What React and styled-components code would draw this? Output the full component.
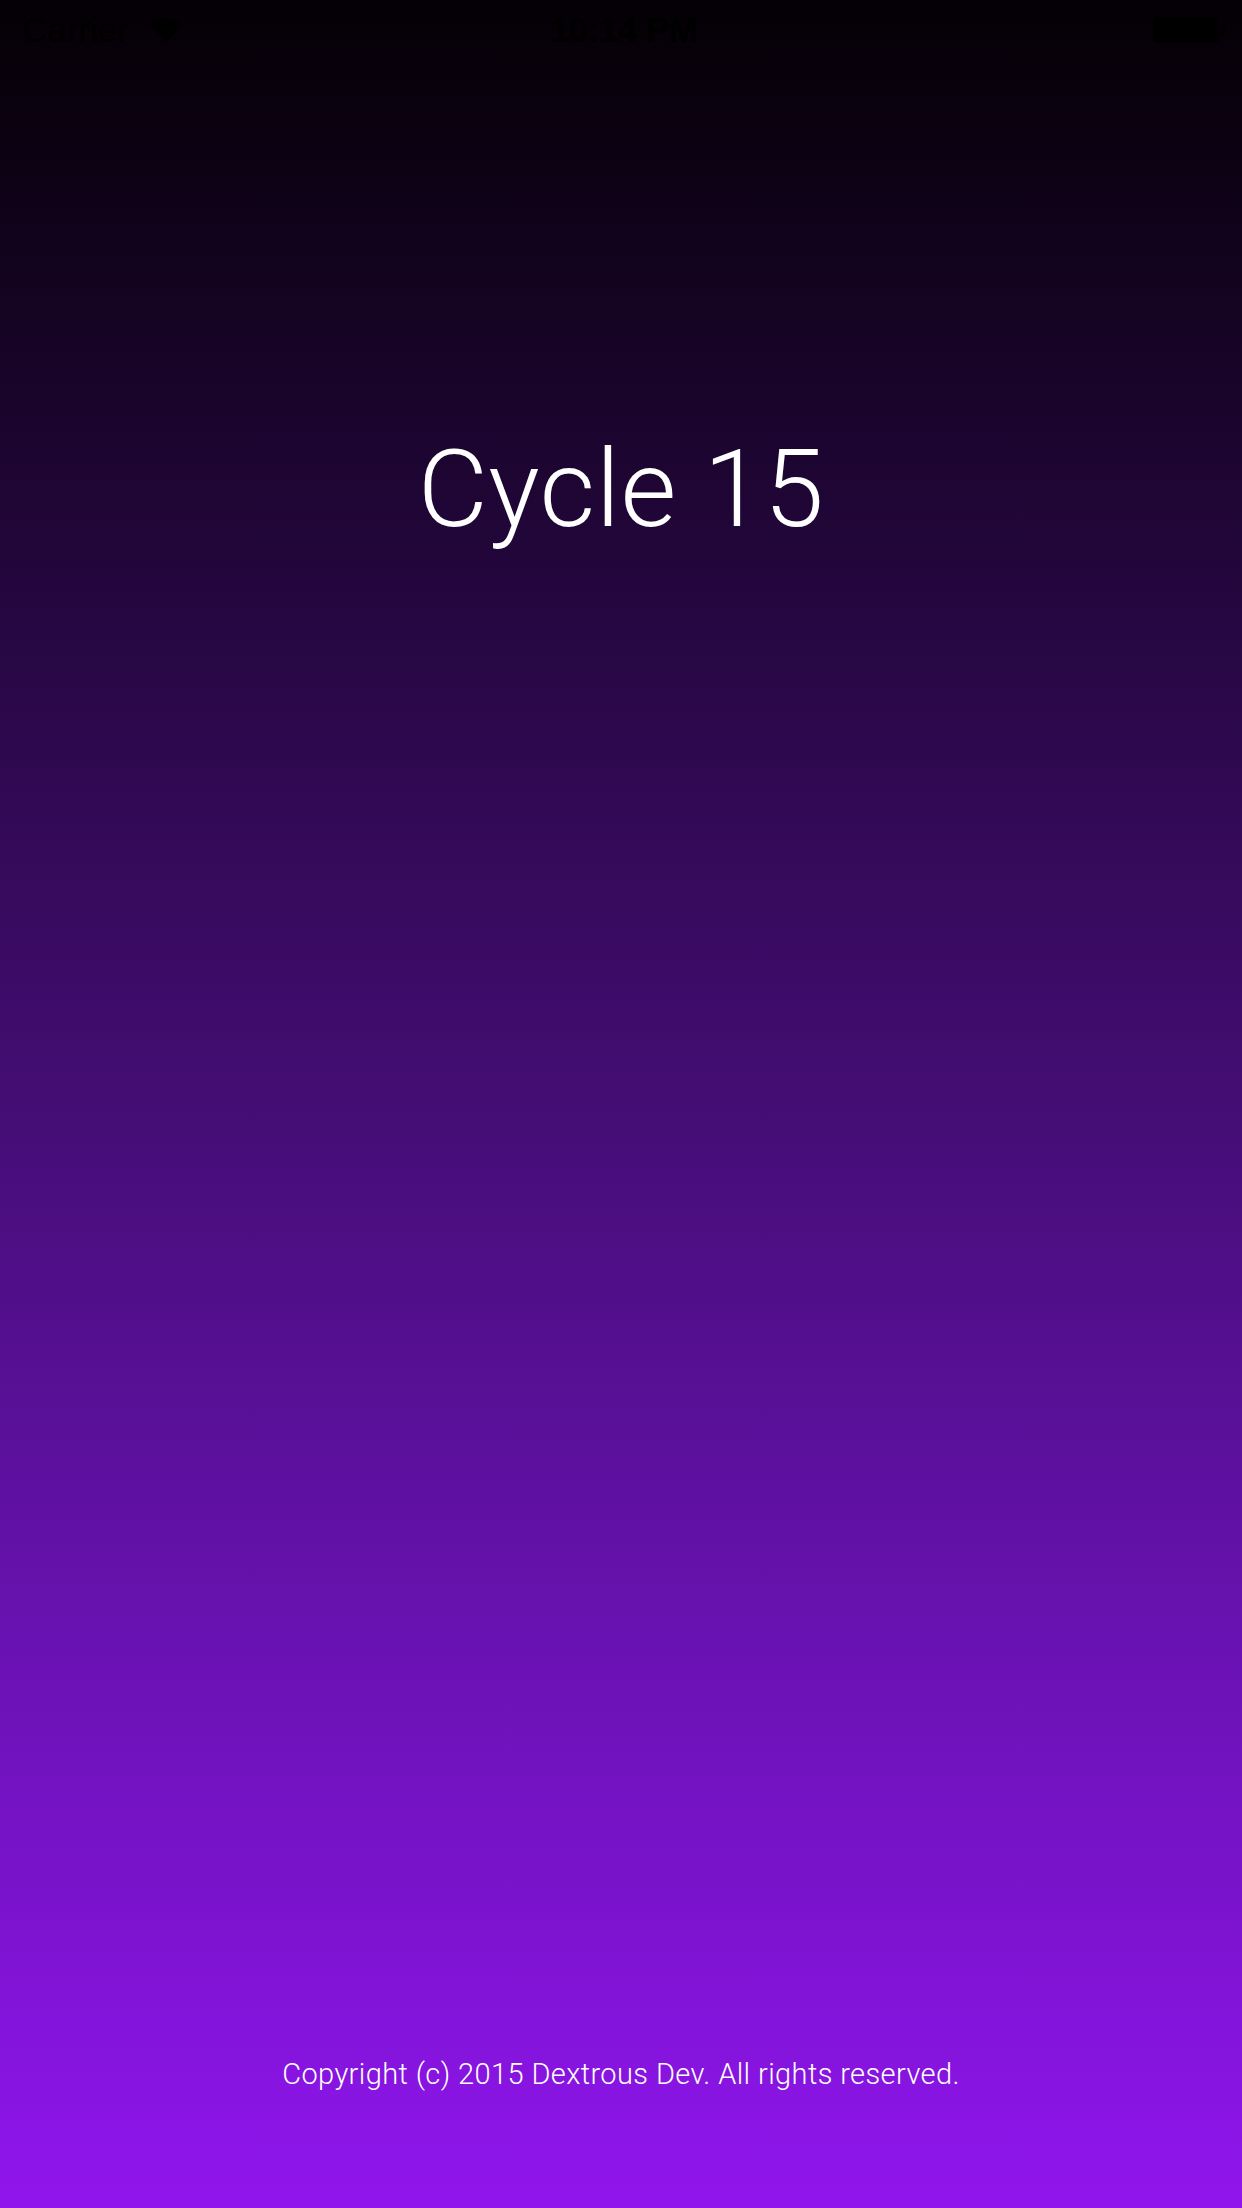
import React from "react";
import styled, { createGlobalStyle } from "styled-components";

const Global = createGlobalStyle`
  html, body { margin: 0; padding: 0; background: #040004; }
  #root { min-height: 2208px; }
`;

const Screen = styled.div`
  width: 1242px;
  height: 2208px;
  display: flex;
  flex-direction: column;
  background: linear-gradient(to bottom, #040004 0%, #22063a 25%, #440d74 50%, #6a12b4 75%, #9015ed 100%);
  font-family: Roboto, "Helvetica Neue", Arial, sans-serif;
  color: #fff;
  overflow: hidden;
`;

const StatusBar = styled.div`
  height: 60px;
  display: grid;
  grid-template-columns: 1fr auto 1fr;
  align-items: center;
  padding: 0 17px 0 22px;
  color: #000;
  font-family: "Liberation Sans", Arial, sans-serif;
  font-size: 35px;
  box-sizing: border-box;
`;

const Left = styled.div`
  display: flex;
  align-items: center;
  gap: 20px;
`;

const Right = styled.div`
  display: flex;
  justify-content: flex-end;
  align-items: center;
`;

const Time = styled.div`
  font-weight: 700;
  letter-spacing: -0.5px;
`;

const Battery = styled.div`
  display: flex;
  align-items: center;
  gap: 2px;
`;

const BatteryBody = styled.div`
  width: 66px;
  height: 26px;
  border-radius: 5px;
  background: #000;
`;

const BatteryNib = styled.div`
  width: 4px;
  height: 10px;
  border-radius: 0 2px 2px 0;
  background: #000;
`;

const Title = styled.h1`
  margin: 354px 0 0;
  font-weight: 300;
  font-size: 108px;
  line-height: 150px;
  text-align: center;
  letter-spacing: 0.5px;
`;

const Spacer = styled.div`
  flex: 1;
`;

const Footer = styled.div`
  font-weight: 300;
  font-size: 29px;
  line-height: 40px;
  text-align: center;
  letter-spacing: 0.4px;
  margin-bottom: 114px;
`;

const Wifi = () => (
  <svg width="34" height="26" viewBox="0 0 34 26">
    <path d="M17 25 L1 8 A23 23 0 0 1 33 8 Z" fill="#000" />
  </svg>
);

export default function App() {
  return (
    <>
      <Global />
      <Screen>
        <StatusBar>
          <Left>
            <span>Carrier</span>
            <Wifi />
          </Left>
          <Time>10:14 PM</Time>
          <Right>
            <Battery>
              <BatteryBody />
              <BatteryNib />
            </Battery>
          </Right>
        </StatusBar>
        <Title>Cycle 15</Title>
        <Spacer />
        <Footer>Copyright (c) 2015 Dextrous Dev. All rights reserved.</Footer>
      </Screen>
    </>
  );
}
